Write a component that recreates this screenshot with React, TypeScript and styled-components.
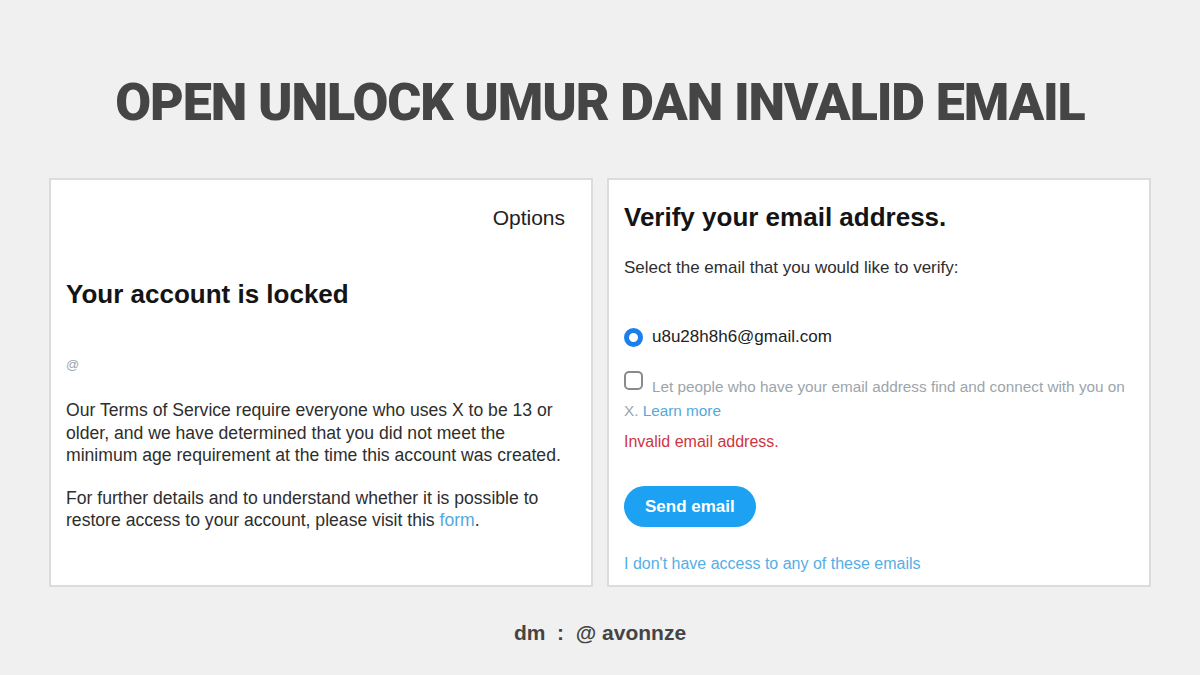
import React from 'react'
import styled, { createGlobalStyle } from 'styled-components'

const GlobalStyle = createGlobalStyle`
  html, body {
    margin: 0;
    padding: 0;
    background: #f0f0f0;
  }
  body {
    font-family: "Liberation Sans", Arial, sans-serif;
  }
`

const App: React.FC = () => {
  return (
    <>
      <GlobalStyle />
      <Page>
        <Title>OPEN UNLOCK UMUR DAN INVALID EMAIL</Title>
        <Cards>
          <Card>
            <Options>Options</Options>
            <LockedHeading>Your account is locked</LockedHeading>
            <Handle>@</Handle>
            <Body>
              Our Terms of Service require everyone who uses X to be 13 or older, and we have
              determined that you did not meet the minimum age requirement at the time this account
              was created.
            </Body>
            <Body $gap={20}>
              For further details and to understand whether it is possible to restore access to your
              account, please visit this <Link>form</Link>.
            </Body>
          </Card>

          <Card>
            <VerifyHeading>Verify your email address.</VerifyHeading>
            <Prompt>Select the email that you would like to verify:</Prompt>
            <RadioRow>
              <Radio />
              <span>u8u28h8h6@gmail.com</span>
            </RadioRow>
            <Discover>
              <Checkbox />
              Let people who have your email address find and connect with you on X.{' '}
              <Link>Learn more</Link>
            </Discover>
            <ErrorText>Invalid email address.</ErrorText>
            <SendButton>Send email</SendButton>
            <NoAccess>I don't have access to any of these emails</NoAccess>
          </Card>
        </Cards>
        <Footer>dm&nbsp; :&nbsp; @ avonnze</Footer>
      </Page>
    </>
  )
}

export default App

const Page = styled.div`
  width: 1200px;
  height: 675px;
  display: flex;
  flex-direction: column;
  align-items: center;
  box-sizing: border-box;
  padding-top: 72px;
`

const Title = styled.h1`
  margin: 0;
  height: 62px;
  font-family: Roboto, "Liberation Sans", sans-serif;
  font-weight: 900;
  font-size: 52px;
  line-height: 62px;
  letter-spacing: -1.1px;
  color: #454545;
  white-space: nowrap;
`

const Cards = styled.div`
  margin-top: 44px;
  display: grid;
  grid-template-columns: 544px 544px;
  gap: 14px;
`

const Card = styled.div`
  height: 409px;
  box-sizing: border-box;
  background: #fff;
  border: 2px solid #dcdcdc;
  padding: 20px 24px 0 15px;
  display: flex;
  flex-direction: column;
  align-items: flex-start;
  color: #2b2b2b;
`

const Options = styled.div`
  align-self: flex-end;
  margin: 6px 2px 0 0;
  font-size: 21px;
  line-height: 24px;
  color: #222;
`

const LockedHeading = styled.h2`
  margin: 49px 0 0;
  font-size: 26px;
  line-height: 30px;
  font-weight: 700;
  color: #141414;
`

const Handle = styled.div`
  margin-top: 48px;
  font-size: 13px;
  line-height: 16px;
  color: #9aa5ae;
`

const Body = styled.p<{ $gap?: number }>`
  margin: ${(p) => p.$gap ?? 26}px 0 0;
  font-size: 17.6px;
  line-height: 22.5px;
  color: #2e2e2e;
`

const Link = styled.span`
  color: #53a9dd;
`

const VerifyHeading = styled.h2`
  margin: 2px 0 0;
  font-size: 26px;
  line-height: 30px;
  font-weight: 700;
  color: #141414;
`

const Prompt = styled.div`
  margin-top: 25px;
  font-size: 17px;
  line-height: 22px;
  color: #2e2e2e;
`

const RadioRow = styled.div`
  margin-top: 47px;
  display: flex;
  align-items: center;
  gap: 9px;
  font-size: 17px;
  line-height: 22px;
  color: #222;
`

const Radio = styled.span`
  width: 19px;
  height: 19px;
  box-sizing: border-box;
  border-radius: 50%;
  border: 5px solid #1b80ee;
  background: #fff;
`

const Discover = styled.p`
  margin: 23px 0 0;
  font-size: 15.3px;
  line-height: 24px;
  color: #9ca5ab;
`

const Checkbox = styled.span`
  display: inline-block;
  width: 19px;
  height: 19px;
  box-sizing: border-box;
  border: 2px solid #8a8a8a;
  border-radius: 5px;
  margin-right: 9px;
  vertical-align: 2px;
`

const ErrorText = styled.div`
  margin-top: 9px;
  font-size: 16px;
  line-height: 20px;
  color: #d0343f;
`

const SendButton = styled.button`
  margin-top: 34px;
  height: 41px;
  padding: 0 21px;
  border: none;
  border-radius: 21px;
  background: #1da1f2;
  color: #fff;
  font-family: "Liberation Sans", Arial, sans-serif;
  font-weight: 700;
  font-size: 17px;
`

const NoAccess = styled.div`
  margin-top: 27px;
  font-size: 16px;
  line-height: 20px;
  color: #55aee6;
`

const Footer = styled.div`
  margin-top: 34px;
  font-size: 21px;
  line-height: 24px;
  font-weight: 700;
  color: #444;
`
